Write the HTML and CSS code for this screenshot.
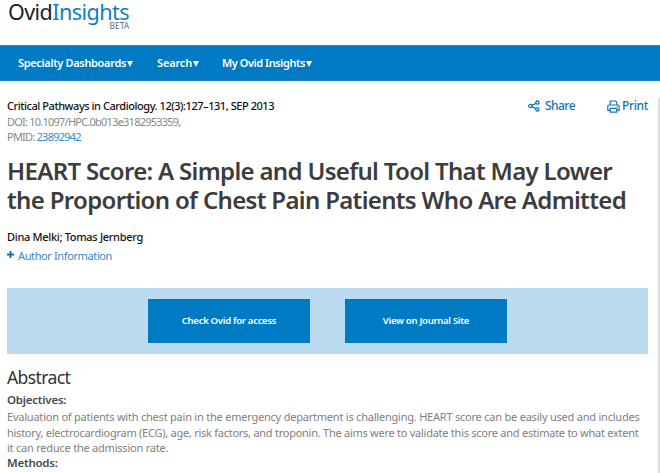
FILE: index.html
```html
<!DOCTYPE html>
<html lang="en">
<head>
    <meta charset="UTF-8">
    <meta name="viewport" content="width=device-width, initial-scale=1.0">
    <title>OvidInsights</title>
    <link rel="stylesheet" href="styles.css">
</head>
<body>
    <header class="site-header">
        <div class="logo">
            <div class="logo-name">Ovid<span>Insights</span></div>
            <div class="logo-beta">BETA</div>
        </div>
    </header>
    <nav class="main-nav">
        <a class="nav-dashboards" href="#">Specialty Dashboards<i class="caret"></i></a>
        <a class="nav-search" href="#">Search<i class="caret"></i></a>
        <a class="nav-my" href="#">My Ovid Insights<i class="caret"></i></a>
    </nav>
    <main class="article">
        <div class="article-top">
            <div class="citation">
                <p class="journal">Critical Pathways in Cardiology. 12(3):127–131, SEP 2013</p>
                <p class="ids">DOI: 10.1097/HPC.0b013e3182953359,</p>
                <p class="ids">PMID: <a href="#">23892942</a></p>
            </div>
            <div class="tools">
                <a class="share" href="#">
                    <svg width="12" height="12" viewBox="0 0 12 12" fill="none" stroke="currentColor" stroke-width="1.3">
                        <circle cx="2.3" cy="6" r="1.6"/>
                        <circle cx="9.4" cy="2.6" r="1.6"/>
                        <circle cx="9.4" cy="9.4" r="1.6"/>
                        <path d="M3.8 5.3 7.9 3.3M3.8 6.7 7.9 8.7"/>
                    </svg>
                    <span>Share</span>
                </a>
                <a class="print" href="#">
                    <svg width="13" height="13" viewBox="0 0 13 13" fill="none" stroke="currentColor" stroke-width="1.2">
                        <path d="M3.2 5V1h5.4l1.2 1.2V5"/>
                        <path d="M3.2 10.4H.8V6.3Q.8 5 2.1 5h8.8q1.3 0 1.3 1.3v4.1H9.8"/>
                        <path d="M3.2 8.4h6.6v3.8H3.2zM9.8 6.7h1"/>
                    </svg>
                    <span>Print</span>
                </a>
            </div>
        </div>
        <h1>
            <span class="title-first">HEART Score: A Simple and Useful Tool That May Lower</span><br>
            the Proportion of Chest Pain Patients Who Are Admitted
        </h1>
        <p class="authors">Dina Melki; Tomas Jernberg</p>
        <a class="author-info" href="#">
            <svg width="7" height="7" viewBox="0 0 7 7"><path d="M3.5 0v7M0 3.5h7" stroke="currentColor" stroke-width="1.9"/></svg>
            <span>Author Information</span>
        </a>
        <div class="access">
            <a class="btn" href="#">Check Ovid for access</a>
            <a class="btn" href="#">View on Journal Site</a>
        </div>
        <section class="abstract">
            <h2>Abstract</h2>
            <h3>Objectives:</h3>
            <p>Evaluation of patients with chest pain in the emergency department is challenging. HEART score can be easily used and includes<br>
            <span class="tight">history, electrocardiogram (ECG), age, risk factors, and troponin. The aims were to validate this score and estimate to what extent</span><br>
            it can reduce the admission rate.</p>
            <h3 class="methods">Methods:</h3>
        </section>
    </main>
</body>
</html>
```
FILE: styles.css
```css
* {
    box-sizing: border-box;
}

body {
    margin: 0;
    height: 473px;
    overflow: hidden;
    background: #fff;
    color: #111;
    font-family: "Noto Sans", sans-serif;
    font-size: 11px;
    white-space: nowrap;
}

h1, h2, h3, p {
    margin: 0;
}

a {
    color: #3a87c8;
    text-decoration: none;
}

svg {
    display: block;
    flex: none;
}

/* Header */
.site-header {
    height: 45px;
    padding-left: 8px;
}

.logo {
    width: 121px;
}

.logo-name {
    height: 22px;
    font-size: 21.5px;
    line-height: 23px;
    letter-spacing: -0.55px;
    color: #222;
}

.logo-name span {
    color: #0a80cb;
}

.logo-beta {
    font-size: 8.5px;
    line-height: 8px;
    letter-spacing: -0.1px;
    text-align: right;
    color: #666;
}

.main-nav {
    display: flex;
    height: 36px;
    padding-left: 18px;
    background: #007ac3;
    border-top: 1px solid #2b90cd;
    border-bottom: 1px solid #1583c6;
    font-weight: 600;
    line-height: 34px;
}

.main-nav a {
    display: flex;
    align-items: center;
    color: #fff;
}

.nav-dashboards {
    width: 139px;
    letter-spacing: -0.34px;
}

.nav-search {
    width: 65px;
    letter-spacing: -0.17px;
}

.nav-my {
    letter-spacing: -0.44px;
}

.caret {
    margin: 2px 0 0 1px;
    border: 3.5px solid transparent;
    border-top: 6px solid #fff;
    border-bottom: 0;
}

/* Article */
.article {
    width: 660px;
    height: 375px;
    margin-top: 17px;
    padding-left: 7px;
    border-right: 2px solid #ddd;
}

.article-top {
    display: flex;
    justify-content: space-between;
    height: 58px;
    padding-right: 10px;
}

.citation {
    line-height: 15.5px;
}

.journal {
    font-weight: 500;
    letter-spacing: -0.447px;
}

.ids {
    color: #888;
    letter-spacing: -0.77px;
}

.tools {
    display: flex;
    font-size: 12px;
    font-weight: 500;
    line-height: 16px;
}

.tools a {
    display: flex;
    align-items: center;
    height: 16px;
    color: #0f74bd;
}

.share {
    gap: 5px;
    width: 79px;
    letter-spacing: -0.54px;
}

.print {
    gap: 2px;
    letter-spacing: -0.35px;
}

h1 {
    font-size: 24px;
    font-weight: 600;
    line-height: 29px;
    letter-spacing: -0.67px;
    color: #3c3c3c;
}

.title-first {
    letter-spacing: -0.677px;
}

.authors {
    margin-top: 15px;
    font-weight: 500;
    line-height: 16px;
    letter-spacing: -0.31px;
}

.author-info {
    display: flex;
    align-items: center;
    gap: 4px;
    margin-top: 2px;
    line-height: 17px;
    letter-spacing: -0.38px;
}

.author-info svg {
    color: #0071bb;
    margin-top: -3px;
}

.access {
    display: flex;
    justify-content: center;
    align-items: center;
    gap: 35px;
    width: 641px;
    height: 66px;
    margin-top: 24px;
    background: #bbdcf0;
}

.btn {
    width: 162px;
    height: 44px;
    background: #007ac3;
    color: #fff;
    font-size: 9.5px;
    font-weight: 600;
    line-height: 44px;
    letter-spacing: -0.28px;
    text-align: center;
}

.abstract {
    color: #808080;
    line-height: 15.5px;
}

.abstract h2 {
    margin-top: 11px;
    color: #333;
    font-size: 17.5px;
    font-weight: 400;
    line-height: 24px;
    letter-spacing: -0.6px;
}

.abstract h3 {
    margin-top: 3px;
    color: #4a4a4a;
    font-size: 11.5px;
    font-weight: 600;
    line-height: 16px;
    letter-spacing: -0.23px;
}

.abstract p {
    margin-top: 1px;
    letter-spacing: -0.218px;
}

.abstract .tight {
    letter-spacing: -0.257px;
}

.abstract h3.methods {
    margin-top: -1px;
}
```
